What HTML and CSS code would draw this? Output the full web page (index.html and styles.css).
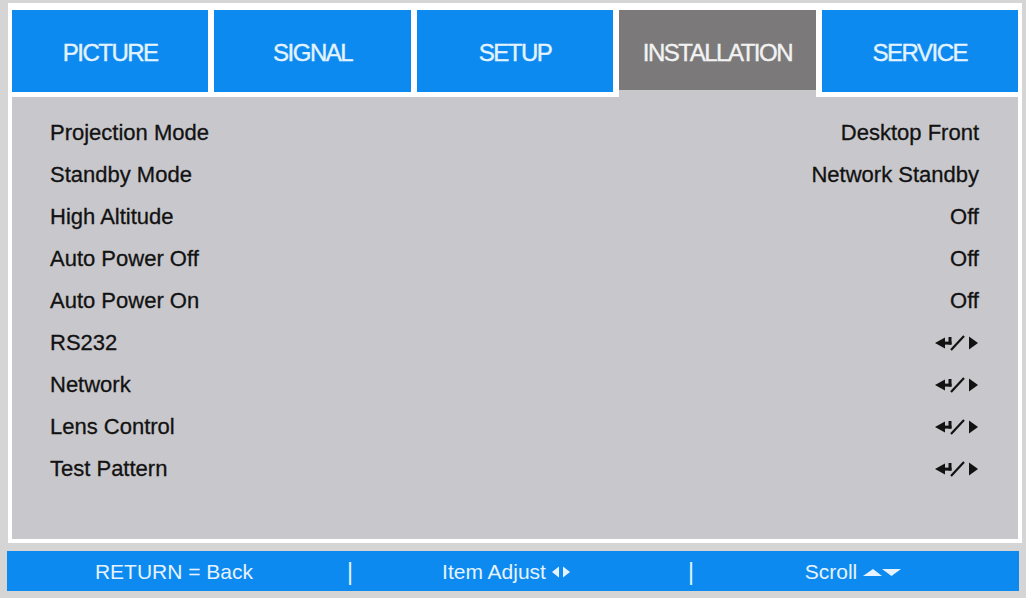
FILE: index.html
```html
<!DOCTYPE html>
<html lang="en">
<head>
<meta charset="utf-8">
<title>Installation</title>
<link rel="stylesheet" href="styles.css">
</head>
<body>
<div class="frame">
  <div class="tabs">
    <div class="tab">PICTURE</div>
    <div class="tab">SIGNAL</div>
    <div class="tab">SETUP</div>
    <div class="tab active">INSTALLATION</div>
    <div class="tab">SERVICE</div>
  </div>
  <div class="panel">
    <div class="row"><span>Projection Mode</span><span>Desktop Front</span></div>
    <div class="row"><span>Standby Mode</span><span>Network Standby</span></div>
    <div class="row"><span>High Altitude</span><span>Off</span></div>
    <div class="row"><span>Auto Power Off</span><span>Off</span></div>
    <div class="row"><span>Auto Power On</span><span>Off</span></div>
    <div class="row"><span>RS232</span><svg class="enter" viewBox="0 0 44 16" width="44" height="16"><polygon points="0,8 10,2.5 10,13.5"/><rect x="9" y="6.6" width="7.5" height="3"/><rect x="13.5" y="2" width="3" height="7.6"/><line x1="16" y1="15" x2="29" y2="1"/><polygon points="34,1.5 43,8 34,14.5"/></svg></div>
    <div class="row"><span>Network</span><svg class="enter" viewBox="0 0 44 16" width="44" height="16"><polygon points="0,8 10,2.5 10,13.5"/><rect x="9" y="6.6" width="7.5" height="3"/><rect x="13.5" y="2" width="3" height="7.6"/><line x1="16" y1="15" x2="29" y2="1"/><polygon points="34,1.5 43,8 34,14.5"/></svg></div>
    <div class="row"><span>Lens Control</span><svg class="enter" viewBox="0 0 44 16" width="44" height="16"><polygon points="0,8 10,2.5 10,13.5"/><rect x="9" y="6.6" width="7.5" height="3"/><rect x="13.5" y="2" width="3" height="7.6"/><line x1="16" y1="15" x2="29" y2="1"/><polygon points="34,1.5 43,8 34,14.5"/></svg></div>
    <div class="row"><span>Test Pattern</span><svg class="enter" viewBox="0 0 44 16" width="44" height="16"><polygon points="0,8 10,2.5 10,13.5"/><rect x="9" y="6.6" width="7.5" height="3"/><rect x="13.5" y="2" width="3" height="7.6"/><line x1="16" y1="15" x2="29" y2="1"/><polygon points="34,1.5 43,8 34,14.5"/></svg></div>
  </div>
</div>
<div class="bar">
  <div class="cell">RETURN = Back</div>
  <div class="cell sep">|</div>
  <div class="cell">Item Adjust <svg class="lr" viewBox="0 0 18 12" width="18" height="12"><polygon points="7,0.5 0,6 7,11.5"/><polygon points="11,0.5 18,6 11,11.5"/></svg></div>
  <div class="cell sep">|</div>
  <div class="cell">Scroll <svg class="ud" viewBox="0 0 38 10" width="38" height="10"><polygon points="0,9 10,2 19,9"/><polygon points="19,2 38,2 28.5,9"/></svg></div>
</div>
</body>
</html>
```

FILE: styles.css
```css
html, body {
  margin: 0;
  padding: 0;
}
body {
  background: #d5d5d6;
  width: 1026px;
  height: 598px;
  overflow: hidden;
  font-family: "Liberation Sans", Arial, sans-serif;
}
.frame {
  margin: 3px 0 0 8px;
  width: 1006px;
  padding: 7px 4px 4px 4px;
  background: #ffffff;
}
.tabs {
  display: grid;
  grid-template-columns: repeat(5, 1fr);
  column-gap: 6px;
}
.tab {
  height: 82px;
  background: #0c8af0;
  color: #e3f3ff;
  font-size: 24px;
  letter-spacing: -1.5px;
  -webkit-text-stroke: 0.4px currentColor;
  display: flex;
  align-items: center;
  justify-content: center;
  padding-top: 3px;
  box-sizing: border-box;
  height: 87px;
  border-bottom: 5px solid #ffffff;
}
.tab.active {
  background: #7b7979;
  color: #f2f2f2;
  border-bottom: 7px solid #c8c7cb;
  padding-top: 5px;
}
.panel {
  background: #c8c7cb;
  height: 427px;
  padding: 15px 39px 0 38px;
}
.row {
  height: 42px;
  display: flex;
  align-items: center;
  justify-content: space-between;
  font-size: 22px;
  color: #121212;
  -webkit-text-stroke: 0.3px currentColor;
}
.enter {
  fill: #121212;
  stroke: #121212;
  stroke-width: 2.2;
}
.enter polygon, .enter rect {
  stroke: none;
}
.bar {
  margin: 8px 0 0 7px;
  width: 1012px;
  height: 40px;
  background: #0c8af0;
  color: #e6f3ff;
  font-size: 21px;
  display: grid;
  grid-template-columns: 334px 18px 294px 76px 248px 1fr;
  align-items: center;
}
.cell {
  text-align: center;
  display: flex;
  align-items: center;
  justify-content: center;
  gap: 6px;
  padding-top: 2px;
}
.sep {
  font-size: 23px;
}
.lr, .ud {
  fill: #e6f3ff;
}
```
